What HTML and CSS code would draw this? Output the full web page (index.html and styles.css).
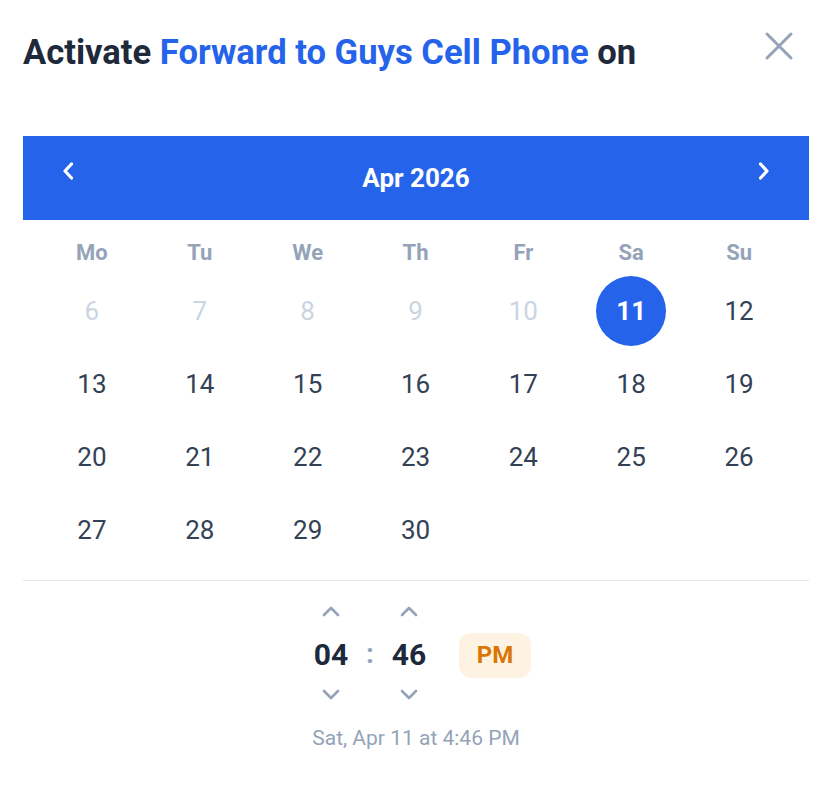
FILE: index.html
```html
<!DOCTYPE html>
<html lang="en">
<head>
<meta charset="utf-8">
<title>Activate Forward</title>
<link rel="stylesheet" href="styles.css">
</head>
<body>
<div class="dialog">
  <div class="dialog-head">
    <h1 class="title">Activate <span class="accent">Forward to Guys Cell Phone</span> on</h1>
    <button class="close" aria-label="Close">
      <svg width="30" height="30" viewBox="0 0 30 30"><path d="M3 3 L27 27 M27 3 L3 27" stroke="#94a3b8" stroke-width="3" stroke-linecap="round" fill="none"/></svg>
    </button>
  </div>

  <div class="calendar">
    <div class="cal-bar">
      <button class="nav" aria-label="Previous month">
        <svg width="14" height="18" viewBox="0 0 14 18"><path d="M10.5 2 L4 9 L10.5 16" stroke="#fff" stroke-width="3.2" fill="none" stroke-linecap="round" stroke-linejoin="round"/></svg>
      </button>
      <div class="month">Apr 2026</div>
      <button class="nav" aria-label="Next month">
        <svg width="14" height="18" viewBox="0 0 14 18"><path d="M3.5 2 L10 9 L3.5 16" stroke="#fff" stroke-width="3.2" fill="none" stroke-linecap="round" stroke-linejoin="round"/></svg>
      </button>
    </div>

    <div class="grid">
      <div class="dow">Mo</div><div class="dow">Tu</div><div class="dow">We</div><div class="dow">Th</div><div class="dow">Fr</div><div class="dow">Sa</div><div class="dow">Su</div>

      <div class="day past">6</div><div class="day past">7</div><div class="day past">8</div><div class="day past">9</div><div class="day past">10</div><div class="day"><span class="sel">11</span></div><div class="day">12</div>
      <div class="day">13</div><div class="day">14</div><div class="day">15</div><div class="day">16</div><div class="day">17</div><div class="day">18</div><div class="day">19</div>
      <div class="day">20</div><div class="day">21</div><div class="day">22</div><div class="day">23</div><div class="day">24</div><div class="day">25</div><div class="day">26</div>
      <div class="day">27</div><div class="day">28</div><div class="day">29</div><div class="day">30</div>
    </div>
  </div>

  <div class="time">
    <div class="time-row">
      <div class="spin">
        <svg class="chev" width="20" height="12" viewBox="0 0 20 12"><path d="M3 10 L10 3 L17 10" stroke="#94a3b8" stroke-width="2.6" fill="none" stroke-linecap="round" stroke-linejoin="round"/></svg>
        <div class="num">04</div>
        <svg class="chev" width="20" height="12" viewBox="0 0 20 12"><path d="M3 2 L10 9 L17 2" stroke="#94a3b8" stroke-width="2.6" fill="none" stroke-linecap="round" stroke-linejoin="round"/></svg>
      </div>
      <div class="colon">:</div>
      <div class="spin">
        <svg class="chev" width="20" height="12" viewBox="0 0 20 12"><path d="M3 10 L10 3 L17 10" stroke="#94a3b8" stroke-width="2.6" fill="none" stroke-linecap="round" stroke-linejoin="round"/></svg>
        <div class="num">46</div>
        <svg class="chev" width="20" height="12" viewBox="0 0 20 12"><path d="M3 2 L10 9 L17 2" stroke="#94a3b8" stroke-width="2.6" fill="none" stroke-linecap="round" stroke-linejoin="round"/></svg>
      </div>
      <button class="ampm">PM</button>
    </div>
    <div class="summary">Sat, Apr 11 at 4:46 PM</div>
  </div>
</div>
</body>
</html>
```

FILE: styles.css
```css
* { box-sizing: border-box; }

html, body {
  margin: 0;
  background: #fff;
  font-family: Roboto, "Liberation Sans", sans-serif;
  color: #1e293b;
}

button {
  border: 0;
  background: none;
  padding: 0;
  font: inherit;
  cursor: pointer;
}

.dialog {
  width: 830px;
  padding: 23px 21px 0 23px;
}

.dialog-head {
  display: flex;
  justify-content: space-between;
  align-items: flex-start;
  height: 113px;
}

.title {
  margin: 7px 0 0;
  font-size: 34.6px;
  font-weight: 700;
  line-height: 44px;
  color: #1e293b;
}

.accent { color: #2563eb; }

.close {
  width: 30px;
  height: 30px;
  margin: 8px 15px 0 0;
}

.close svg { display: block; }

.cal-bar {
  height: 84px;
  background: #2563eb;
  display: flex;
  align-items: center;
  justify-content: space-between;
  padding: 0 38px 12px 38px;
}

.cal-bar .nav {
  width: 14px;
  height: 18px;
  margin-top: -2px;
}

.cal-bar .nav svg { display: block; }

.month {
  color: #fff;
  font-size: 26px;
  font-weight: 700;
  margin-top: 12px;
}

.grid {
  display: grid;
  grid-template-columns: repeat(7, 1fr);
  padding: 0 16px 0 15px;
}

.dow {
  height: 64px;
  display: flex;
  align-items: center;
  justify-content: center;
  padding-top: 1px;
  font-size: 22px;
  font-weight: 700;
  color: #94a3b8;
}

.day {
  height: 73px;
  display: flex;
  align-items: center;
  justify-content: center;
  font-size: 26px;
  color: #334155;
  padding-bottom: 20px;
}

.day.past { color: #cbd5e1; }

.sel {
  width: 70px;
  height: 70px;
  border-radius: 50%;
  background: #2563eb;
  color: #fff;
  font-weight: 700;
  display: flex;
  align-items: center;
  justify-content: center;
}

.time {
  border-top: 1px solid #e2e8f0;
  margin-top: 4px;
  display: flex;
  flex-direction: column;
  align-items: center;
  padding-top: 24px;
}

.time-row {
  display: flex;
  align-items: center;
}

.spin {
  display: flex;
  flex-direction: column;
  align-items: center;
  width: 60px;
}

.chev { display: block; }

.num {
  font-size: 30px;
  font-weight: 700;
  color: #1e293b;
  line-height: 40px;
  margin: 18px 0 14px;
}

.colon {
  width: 18px;
  text-align: center;
  font-size: 28px;
  font-weight: 700;
  color: #94a3b8;
  margin-top: 0;
}

.ampm {
  margin: 4px 0 0 20px;
  width: 72px;
  height: 45px;
  border-radius: 12px;
  background: #fef3e2;
  color: #d97706;
  font-size: 24px;
  font-weight: 700;
}

.summary {
  margin-top: 25px;
  font-size: 21px;
  color: #94a3b8;
}
```
